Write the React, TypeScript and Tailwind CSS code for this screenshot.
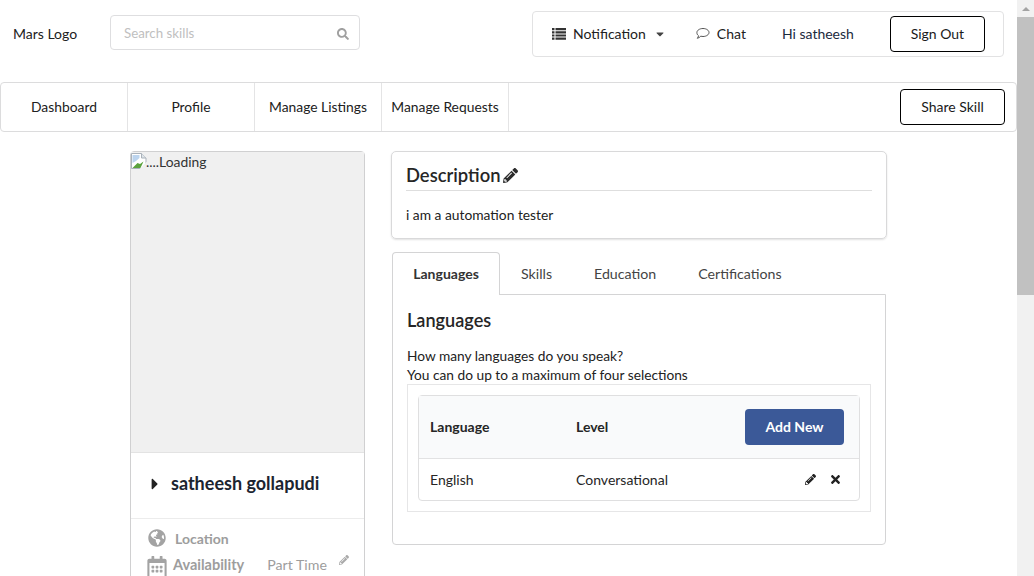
import React from 'react'
import { FaCaretDown, FaCaretRight, FaGlobeAmericas, FaPencilAlt, FaRegCalendarAlt, FaSearch, FaTimes } from 'react-icons/fa'

function BrokenImage() {
  return (
    <svg width="16" height="16" viewBox="0 0 16 16" className="shrink-0 mt-[1px]">
      <path d="M0.5 0.500h10l4.500 4.500v10.500H0.500z" fill="#ffffff" stroke="#aab2ba" />
      <path d="M10.500 0.500v4.500h4.500" fill="#dfe5ea" stroke="#aab2ba" />
      <path d="M1.500 2h7v3l-3.500 3-3.500 2z" fill="#bcd4ee" />
      <path d="M1.500 15l5-5 2.500 1 3.500-2.500-3 6.500z" fill="#5ba33e" />
      <path d="M8.500 16l7.500-7.500v7.500z" fill="#f0f0f0" />
    </svg>
  )
}

function ListIcon() {
  return (
    <svg width="14" height="12" viewBox="0 0 14 12" fill="#333" className="shrink-0">
      <path d="M0 0h2.500v2.200H0zM3.500 0H14v2.200H3.500zM0 3.200h2.500v2.200H0zM3.500 3.200H14v2.200H3.500zM0 6.400h2.500v2.200H0zM3.500 6.400H14v2.200H3.500zM0 9.600h2.500v2.200H0zM3.500 9.600H14v2.200H3.500z" />
    </svg>
  )
}

function ChatIcon() {
  return (
    <svg width="14" height="13" viewBox="0 0 14 13" fill="none" stroke="#555" strokeWidth="1" className="ml-[30px] shrink-0">
      <path d="M7 1.500c3.300 0 6 1.800 6 4s-2.700 4-6 4c-.8 0-1.500-.1-2.200-.3C3.800 10.300 2.600 11 1.300 11.300c.7-.8 1.100-1.600 1.200-2.600C1.300 7.900.9 6.700.9 5.500c0-2.200 2.800-4 6.100-4z" />
    </svg>
  )
}

function NavItem({ label }: { label: string }) {
  return <div className="w-[127px] pb-[2px] flex items-center justify-center border-r border-[#e4e4e5] whitespace-nowrap text-[13.85px]">{label}</div>
}

export default function App() {
  return (
    <div className="flex h-[576px] overflow-hidden bg-white text-[14px] leading-[19px] text-[#212121] font-['Lato','Liberation_Sans',sans-serif]">
      <div className="w-[1017px] shrink-0">
        <div className="h-[82px] flex items-start">
          <div className="ml-[13px] mt-[24px] w-[84px]">Mars Logo</div>
          <div className="mt-[15px] w-[250px] h-[35px] ml-[13px] border border-[#dedee0] rounded flex items-center justify-between pl-[13px] pr-[10px]">
            <span className="text-[#c0c0c0] text-[13.3px] mt-[1px]">Search skills</span>
            <FaSearch className="text-[#a0a0a0] text-[12px] mt-[2px]" />
          </div>
          <div className="mt-[11px] ml-[172px] w-[472px] h-[46px] pb-[1px] border border-[#e2e2e3] rounded flex items-center pl-[19px]">
            <ListIcon />
            <span className="ml-[7px]">Notification</span>
            <FaCaretDown className="ml-[8px] text-[#444] text-[12px]" />
            <ChatIcon />
            <span className="ml-[7px]">Chat</span>
            <span className="ml-[36px] text-[#1b2a3d]">Hi satheesh</span>
            <button className="ml-[36px] w-[95px] h-[36px] mt-[1px] pb-[1px] border border-black rounded text-[#1a1a1a]">Sign Out</button>
          </div>
        </div>

        <div className="h-[50px] border border-[#dcdcdd] rounded flex items-stretch justify-between">
          <div className="flex">
            <NavItem label="Dashboard" />
            <NavItem label="Profile" />
            <NavItem label="Manage Listings" />
            <NavItem label="Manage Requests" />
          </div>
          <div className="flex items-center pr-[11px]">
            <button className="w-[105px] h-[36px] pb-[1px] border border-black rounded text-[#1a1a1a]">Share Skill</button>
          </div>
        </div>

        <div className="mt-[19px] ml-[130px] flex items-start">
          <div className="w-[235px] h-[500px] shrink-0 border border-[#d0d0d1] rounded-t">
            <div className="h-[301px] bg-[#f0f0f0] border-b border-[#e3e3e3] flex items-start">
              <BrokenImage />
              <span className="text-[#333] text-[13.85px] -ml-[1px]">....Loading</span>
            </div>
            <div className="h-[66px] pb-[4px] border-b border-[#ececec] flex items-center pl-[15px]">
              <FaCaretRight className="text-[#222] text-[18px]" />
              <span className="ml-[7px] text-[18px] font-bold text-[#1c2430]">satheesh gollapudi</span>
            </div>
            <div className="pl-[16px] pt-[9px] text-[#9d9d9d]">
              <div className="flex items-center h-[20px]">
                <FaGlobeAmericas className="ml-[1px] text-[18px] text-[#a3a3a3]" />
                <span className="ml-[9px] font-bold">Location</span>
              </div>
              <div className="flex items-center h-[20px] mt-[6px]">
                <FaRegCalendarAlt className="text-[22px] text-[#a3a3a3] -ml-[1px] mt-[5px]" />
                <span className="ml-[5px] font-bold text-[14.5px]">Availability</span>
                <span className="ml-[23px] text-[14.2px]">Part Time</span>
                <FaPencilAlt className="ml-[12px] -mt-[8px] text-[10px] text-[#a9a9a9]" />
              </div>
            </div>
          </div>

          <div className="ml-[26px] w-[496px]">
            <div className="h-[88px] border border-[#d9d9da] rounded-[5px] shadow-[0_1px_2px_rgba(0,0,0,0.12)] px-[14px]">
              <div className="h-[39px] pt-[8px] border-b border-[#dedede] flex items-center gap-[3px] text-[18.4px] font-semibold text-[#262626]">
                Description
                <FaPencilAlt className="text-[15px] text-[#2c2c2c] mt-[1px] -ml-[1px]" />
              </div>
              <p className="mt-[14px] text-[13.8px]">i am a automation tester</p>
            </div>

            <div className="mt-[13px] ml-[1px] w-[494px]">
              <div className="flex h-[42px] items-stretch">
                <div className="w-[108px] -mb-px z-10 bg-white border border-b-0 border-[#d4d4d5] rounded-t flex items-center justify-center pb-[1px] font-bold text-[#333]">Languages</div>
                <div className="ml-[21px] flex items-center text-[#444] text-[14.2px]">Skills</div>
                <div className="ml-[42px] flex items-center text-[#444] text-[14.2px]">Education</div>
                <div className="ml-[42px] flex items-center text-[#444] text-[14.2px]">Certifications</div>
              </div>
              <div className="h-[251px] border border-[#d4d4d5] rounded-b px-[14px]">
                <h2 className="mt-[14px] text-[18.1px] leading-[22px] font-semibold text-[#262626]">Languages</h2>
                <p className="mt-[15px] text-[13.72px] text-[#222]">How many languages do you speak?<br />You can do up to a maximum of four selections</p>
                <div className="h-[128px] w-[464px] border border-[#e6e6e7] px-[10px] pt-[10px]">
                  <div className="border border-[#dfdfe0] rounded">
                    <div className="h-[63px] bg-[#f9fafb] border-b border-[#e2e2e3] flex items-center pl-[11px] pr-[15px] font-bold text-[#262626]">
                      <span className="w-[146px] -mt-[1px]">Language</span>
                      <span className="-mt-[1px]">Level</span>
                      <button className="ml-auto w-[99px] h-[36px] pb-[1px] bg-[#3b5998] rounded text-white font-bold">Add New</button>
                    </div>
                    <div className="h-[41px] flex items-center pl-[11px] text-[#262626]">
                      <span className="w-[146px]">English</span>
                      <span className="text-[14.03px]">Conversational</span>
                      <FaPencilAlt className="ml-[137px] text-[11px] text-[#222]" />
                      <FaTimes className="ml-[13px] text-[13px] text-[#222]" />
                    </div>
                  </div>
                </div>
              </div>
            </div>
          </div>
        </div>
      </div>

      <div className="w-[17px] shrink-0 bg-[#f1f1f1] flex flex-col items-center">
        <div className="h-[17px] flex items-center justify-center">
          <div className="w-0 h-0 border-x-[4px] border-x-transparent border-b-[4px] border-b-[#a3a3a3]" />
        </div>
        <div className="w-full h-[278px] bg-[#c1c1c1]" />
      </div>
    </div>
  )
}
